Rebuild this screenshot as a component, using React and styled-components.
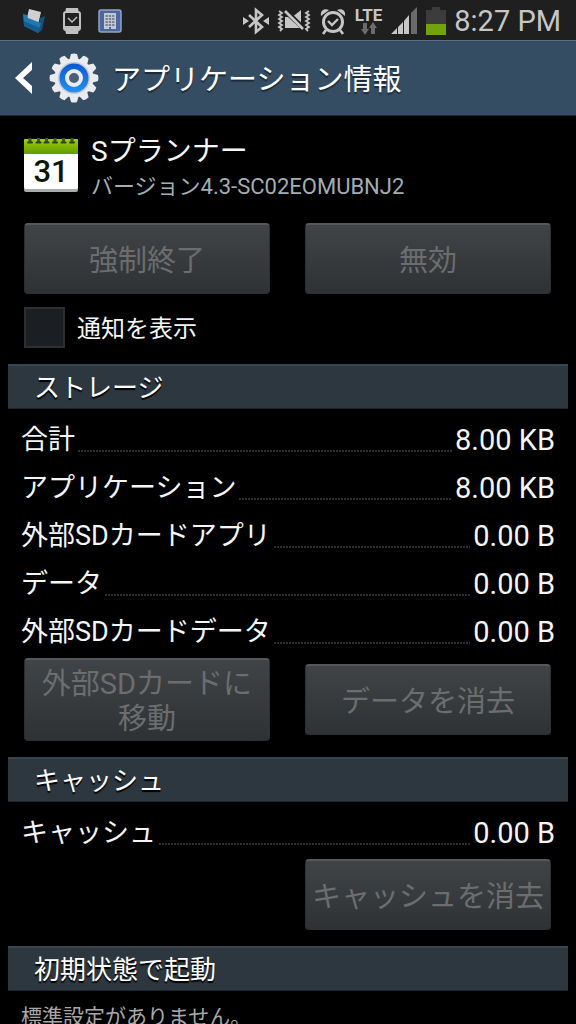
import React from 'react'

import styled, { createGlobalStyle } from 'styled-components'

const GlobalStyle = createGlobalStyle`
  * {
    box-sizing: border-box;
  }

  body {
    margin: 0;
    background: #000;
    color: #f5f5f5;
    font-family: Roboto, 'Noto Sans CJK JP', sans-serif;
  }
`

const Screen = styled.div`
  display: flex;
  flex-direction: column;
  height: 100vh;
  overflow: hidden;
`

const StatusBar = styled.header`
  display: flex;
  flex-shrink: 0;
  align-items: center;
  justify-content: space-between;
  height: 40px;
  padding: 2px 15px 0 20px;
  background: #1f1f1f;
  color: #c6c6c6;
`

const StatusGroup = styled.div`
  display: flex;
  align-items: center;
  gap: ${props => props.$gap}px;

  & > svg {
    display: block;
  }
`

const Network = styled.div`
  display: flex;
  flex-direction: column;
  align-items: center;
  padding-top: 2px;
  font-size: 17px;
  font-weight: 700;
  line-height: 14px;
`

const Clock = styled.span`
  font-size: 29px;
  line-height: 38px;
`

const TitleBar = styled.div`
  display: flex;
  flex-shrink: 0;
  align-items: center;
  height: 76px;
  padding: 0 14px;
  border-top: 1px solid #5a6e80;
  border-bottom: 1px solid #1d2a36;
  background: #354d63;
`

const BackButton = styled.button`
  display: flex;
  align-items: center;
  gap: 15px;
  padding: 0;
  border: 0;
  background: none;
`

const Title = styled.h1`
  margin: 0 0 0 13px;
  padding-top: 4px;
  color: #fff;
  font-size: 29px;
  font-weight: 400;
  line-height: 40px;
  text-shadow: 0 2px 1px #1b2938;
`

const Content = styled.main`
  flex: 1;
  overflow-y: auto;
  scrollbar-width: none;
`

const AppInfo = styled.section`
  display: flex;
  align-items: flex-start;
  gap: 13px;
  padding: 18px 24px 19px;
`

const AppName = styled.h2`
  margin: 0;
  font-size: 28px;
  font-weight: 400;
  line-height: 36px;
`

const AppVersion = styled.p`
  margin: 0;
  color: #a3adb2;
  font-size: 22px;
  line-height: 34px;
`

const ButtonRow = styled.div`
  display: grid;
  grid-template-columns: 1fr 1fr;
  align-items: center;
  gap: 35px;
  padding: 0 25px 0 24px;
`

const ActionButton = styled.button`
  grid-column: ${props => props.$column || 'auto'};
  min-height: 71px;
  padding: 7px 5px 3px;
  border: 1px solid #2c2f31;
  border-top: 2px solid #54585b;
  border-radius: 4px;
  background: linear-gradient(#414446, #2f3234);
  color: #6b6d6e;
  font-family: inherit;
  font-size: 29px;
  line-height: 35px;
`

const CheckLabel = styled.label`
  display: flex;
  align-items: center;
  gap: 12px;
  padding: 13px 24px 16px;
  font-size: 24px;
`

const CheckText = styled.span`
  padding-top: 3px;
  line-height: 38px;
`

const CheckBox = styled.input`
  appearance: none;
  width: 41px;
  height: 41px;
  margin: 0;
  border: 2px solid #2e2e2e;
  background: #1b1e22;

  &:checked {
    background: #5f8f1a;
  }
`

const SectionTitle = styled.h3`
  margin: ${props => props.$top || 0}px 8px 7px;
  padding: 3px 26px 0;
  border-top: 2px solid #38444e;
  border-bottom: 1px solid #1d252c;
  background: #2d3740;
  color: #fff;
  font-size: 26px;
  font-weight: 400;
  line-height: 39px;
  text-shadow: 0 2px 1px #000;
`

const SizeList = styled.dl`
  margin: 0;
  padding: 0 21px 2px;
`

const SizeRow = styled.div`
  display: flex;
  align-items: center;
  gap: 3px;
  height: 48px;
  line-height: 48px;
`

const SizeLabel = styled.dt`
  font-size: 27px;
`

const Leader = styled.span`
  flex: 1;
  align-self: flex-end;
  height: 2px;
  margin-bottom: 12px;
  background: repeating-linear-gradient(90deg, #2e2e2e 0 2px, #000 2px 3px);
`

const SizeValue = styled.dd`
  margin: 0;
  font-size: 29px;
`

const Note = styled.p`
  margin: 0;
  padding: 0 21px;
  color: #a8a8a8;
  font-size: 21px;
  line-height: 38px;
`

const FolderIcon = () => (
  <svg width="26" height="26" viewBox="0 0 26 26">
    <path d="M9 1l12 3-3 13-12-3z" fill="#cfcfcf" />
    <path d="M20 10l5-2-3 14-4 3z" fill="#14527c" />
    <path d="M3 6l4 1 1 3 13 5-3 10L4 18z" fill="#1f77ae" />
    <path d="M4 18l14 7 2-5L4 13z" fill="#155d90" />
  </svg>
)

const WatchIcon = () => (
  <svg width="20" height="28" viewBox="0 0 20 28">
    <path d="M4 1h12l1 5H3zM3 22h14l-1 5H4z" fill="#c0c0c0" />
    <rect x="2" y="5" width="16" height="18" rx="2" fill="#202020" stroke="#c0c0c0" strokeWidth="2" />
    <path d="M3 19h14v3H3z" fill="#c0c0c0" />
    <path d="M6 11l4 4 5-5" fill="none" stroke="#c0c0c0" strokeWidth="1.5" />
  </svg>
)

const BuildingIcon = () => (
  <svg width="24" height="24" viewBox="0 0 24 24">
    <rect x="1" y="1" width="22" height="22" rx="2" fill="#4a68a0" stroke="#93a4c4" strokeWidth="1.5" />
    <path d="M6 4h12v16h-5v-2h-2v2H6z" fill="#c4c8cf" />
    <path d="M7.500 7h9M7.500 10h9M7.500 13h9M7.500 16h9" stroke="#5b6a84" strokeWidth="1.4" strokeDasharray="2.300 1" />
  </svg>
)

const BluetoothIcon = () => (
  <svg width="26" height="28" viewBox="0 0 26 28">
    <path d="M6 8l13 12-6 5V3l6 5L6 20" fill="none" stroke="#c6c6c6" strokeWidth="2.6" />
    <path d="M0 10l6 4-6 4zM26 10l-6 4 6 4z" fill="#c6c6c6" />
  </svg>
)

const MuteIcon = () => (
  <svg width="34" height="24" viewBox="0 0 34 24">
    <path d="M8 8h3l12 11H8zM14 9l10-8v17z" fill="#c6c6c6" />
    <path d="M10 1l18 18" stroke="#1f1f1f" strokeWidth="2" />
    <path d="M8 2l18 18" stroke="#c6c6c6" strokeWidth="2.6" />
    <path
      d="M2 2l3 2-3 2 3 2-3 2 3 2-3 2 3 2-3 2 3 2-2 2M32 2l-3 2 3 2-3 2 3 2-3 2 3 2-3 2 3 2-3 2 2 2"
      fill="none"
      stroke="#c6c6c6"
      strokeWidth="1.8"
    />
  </svg>
)

const AlarmIcon = () => (
  <svg width="28" height="28" viewBox="0 0 28 28">
    <circle cx="14" cy="15" r="9.5" fill="none" stroke="#c6c6c6" strokeWidth="3" />
    <path d="M9 14l4 4 6-6" fill="none" stroke="#c6c6c6" strokeWidth="2.4" />
    <path d="M7 23l-3 4M21 23l3 4" stroke="#c6c6c6" strokeWidth="2.6" />
    <path d="M2 9C1 4 5 1 10 3zM26 9c1-5-3-8-8-6z" fill="#c6c6c6" />
  </svg>
)

const TransferIcon = () => (
  <svg width="18" height="14" viewBox="0 0 18 14">
    <path d="M3 1h4v6h2l-4 6-4-6h2zM11 12h4V6h2l-4-6-4 6h2z" fill="#6b6b6b" />
  </svg>
)

const SignalIcon = () => (
  <svg width="28" height="28" viewBox="0 0 28 28">
    <path d="M1 27l6-6v6zM8 20l5-5v12H8zM14 14l5-6v19h-5z" fill="#c6c6c6" />
    <path d="M21 6l6-6v27h-6z" fill="#6b6b6b" />
  </svg>
)

const BatteryIcon = () => (
  <svg width="20" height="28" viewBox="0 0 20 28">
    <path d="M6 0h8v3h6v14H0V3h6z" fill="#3c3c3c" />
    <path d="M0 17h20v11H0z" fill="#73a30b" />
  </svg>
)

const BackIcon = () => (
  <svg width="20" height="34" viewBox="0 0 20 34">
    <path d="M18 1v8L9 17l9 8v8L1 17z" fill="#fff" />
  </svg>
)

const teeth = [0, 30, 60, 90, 120, 150, 180, 210, 240, 270, 300, 330]

const SettingsIcon = () => (
  <svg width="50" height="50" viewBox="0 0 50 50">
    <defs>
      <linearGradient id="ring" x2="0" y2="1">
        <stop stopColor="#0a58cf" />
        <stop offset="1" stopColor="#2490f5" />
      </linearGradient>
    </defs>
    {teeth.map(angle => (
      <path key={angle} d="M20 8l2-7q3-1 6 0l2 7z" fill="#e9ebee" transform={`rotate(${angle} 25 25)`} />
    ))}
    <circle cx="25" cy="25" r="19.5" fill="#e9ebee" />
    <circle cx="25" cy="25" r="16" fill="#c3c9d2" />
    <circle cx="25" cy="25" r="14.5" fill="url(#ring)" />
    <circle cx="25" cy="25" r="7" fill="#4a6078" stroke="#e9ebee" strokeWidth="4" />
  </svg>
)

const CalendarIcon = () => (
  <svg width="54" height="58" viewBox="0 0 54 58" role="img" aria-label="Sプランナー">
    <defs>
      <linearGradient id="leaf" x2="0" y2="1">
        <stop stopColor="#a1cd08" />
        <stop offset="1" stopColor="#5f9c00" />
      </linearGradient>
    </defs>
    <rect y="5" width="54" height="53" rx="2" fill="#a9adad" />
    <rect y="5" width="54" height="50" rx="2" fill="#fff" />
    <path d="M2 5h50q2 0 2 2v13H0V7q0-2 2-2z" fill="url(#leaf)" />
    <path d="M6 4v4M14.500 4v4M22.500 4v4M31 4v4M39.500 4v4M48 4v4" stroke="#3c5a1c" strokeWidth="3" />
    <path
      d="M4 8.500h4M12.500 8.500h4M20.500 8.500h4M29 8.500h4M37.500 8.500h4M46 8.500h4"
      stroke="#29421a"
      strokeWidth="2"
      strokeLinecap="round"
    />
    <text
      x="27"
      y="48"
      textAnchor="middle"
      fontFamily="Roboto, sans-serif"
      fontSize="31"
      fontWeight="500"
      fill="#0a1608"
    >
      31
    </text>
  </svg>
)

const storage = [
  { label: '合計', value: '8.00 KB' },
  { label: 'アプリケーション', value: '8.00 KB' },
  { label: '外部SDカードアプリ', value: '0.00 B' },
  { label: 'データ', value: '0.00 B' },
  { label: '外部SDカードデータ', value: '0.00 B' }
]

const cache = [{ label: 'キャッシュ', value: '0.00 B' }]

const Sizes = ({ items }) => (
  <SizeList>
    {items.map(item => (
      <SizeRow key={item.label}>
        <SizeLabel>{item.label}</SizeLabel>
        <Leader />
        <SizeValue>{item.value}</SizeValue>
      </SizeRow>
    ))}
  </SizeList>
)

const App = () => (
  <>
    <GlobalStyle />
    <Screen>
      <StatusBar>
        <StatusGroup $gap={16}>
          <FolderIcon />
          <WatchIcon />
          <BuildingIcon />
        </StatusGroup>
        <StatusGroup $gap={8}>
          <BluetoothIcon />
          <MuteIcon />
          <AlarmIcon />
          <Network>
            LTE
            <TransferIcon />
          </Network>
          <SignalIcon />
          <BatteryIcon />
          <Clock>8:27 PM</Clock>
        </StatusGroup>
      </StatusBar>
      <TitleBar>
        <BackButton type="button" aria-label="戻る">
          <BackIcon />
          <SettingsIcon />
        </BackButton>
        <Title>アプリケーション情報</Title>
      </TitleBar>
      <Content>
        <AppInfo>
          <CalendarIcon />
          <div>
            <AppName>Sプランナー</AppName>
            <AppVersion>バージョン4.3-SC02EOMUBNJ2</AppVersion>
          </div>
        </AppInfo>
        <ButtonRow>
          <ActionButton type="button" disabled>強制終了</ActionButton>
          <ActionButton type="button" disabled>無効</ActionButton>
        </ButtonRow>
        <CheckLabel>
          <CheckBox type="checkbox" />
          <CheckText>通知を表示</CheckText>
        </CheckLabel>
        <SectionTitle>ストレージ</SectionTitle>
        <Sizes items={storage} />
        <ButtonRow>
          <ActionButton type="button" disabled>外部SDカードに移動</ActionButton>
          <ActionButton type="button" disabled>データを消去</ActionButton>
        </ButtonRow>
        <SectionTitle $top={16}>キャッシュ</SectionTitle>
        <Sizes items={cache} />
        <ButtonRow>
          <ActionButton type="button" disabled $column={2}>キャッシュを消去</ActionButton>
        </ButtonRow>
        <SectionTitle $top={16}>初期状態で起動</SectionTitle>
        <Note>標準設定がありません。</Note>
      </Content>
    </Screen>
  </>
)

export default App
